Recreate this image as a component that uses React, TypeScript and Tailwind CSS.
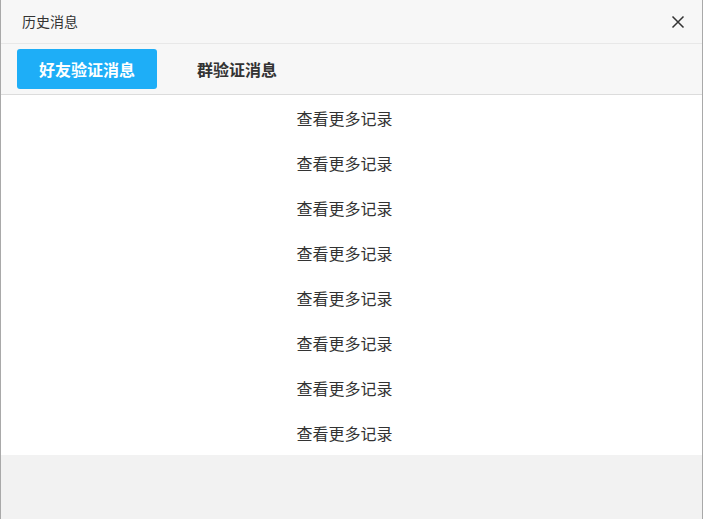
const rows = Array.from({ length: 8 }, (_, i) => i);

export default function App() {
  return (
    <div
      className="w-[703px] h-[519px] flex flex-col bg-[#f2f2f2] border-x border-[#a9a9a9] overflow-hidden"
      style={{ fontFamily: '"Noto Sans CJK SC", "Noto Sans", sans-serif' }}
    >
      {/* Title bar */}
      <div className="h-[44px] shrink-0 flex items-center justify-between pl-[21px] pr-[17px] bg-[#f7f7f7] border-b border-[#e8e8e8]">
        <span className="text-[14px] text-[#333]">历史消息</span>
        <svg className="w-[14px] h-[14px] text-[#333]" viewBox="0 0 14 14" fill="none" stroke="currentColor" strokeWidth={1.5}>
          <path d="M1.5 1.5l11 11M12.5 1.5l-11 11" />
        </svg>
      </div>

      {/* Tabs */}
      <div className="h-[51px] shrink-0 flex items-center gap-[40px] pl-[16px] bg-[#f7f7f7] border-b border-[#dcdcdc]">
        <button className="w-[140px] h-[40px] rounded-[3px] bg-[#1eaef7] text-white text-[16px] font-bold">
          好友验证消息
        </button>
        <button className="h-[40px] text-[#333] text-[16px] font-bold">群验证消息</button>
      </div>

      {/* List */}
      <div className="bg-white flex flex-col pr-[14px]">
        {rows.map((i) => (
          <div key={i} className="h-[45px] flex items-center justify-center text-[16px] text-[#333]">
            查看更多记录
          </div>
        ))}
      </div>
    </div>
  );
}
